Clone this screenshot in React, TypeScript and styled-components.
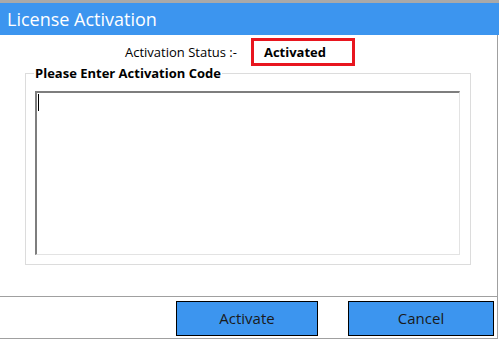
import React from "react";
import styled, { createGlobalStyle } from "styled-components";

const GlobalStyle = createGlobalStyle`
  html, body {
    margin: 0;
    padding: 0;
    background: #ffffff;
  }
  body {
    font-family: "Open Sans", "Noto Sans", "Liberation Sans", sans-serif;
  }
`;

// window frame
const Window = styled.div`
  width: 499px;
  height: 339px;
  box-sizing: border-box;
  border-top: 3px solid #a9a9a9;
  display: flex;
  flex-direction: column;
  background: #ffffff;
`;

const TitleBar = styled.div`
  height: 32px;
  background: #3c95ef;
  color: #ffffff;
  font-size: 18px;
  line-height: 32px;
  padding-left: 7px;
  flex-shrink: 0;
`;

const Body = styled.div`
  flex: 1;
  width: 498px;
  box-sizing: border-box;
  border-right: 1px solid #a0a0a0;
  border-bottom: 1px solid #a0a0a0;
  display: flex;
  flex-direction: column;
`;

const StatusRow = styled.div`
  display: flex;
  align-items: center;
  gap: 14px;
  padding-left: 125px;
  margin-top: 3px;
  height: 28px;
  font-size: 13px;
  color: #000;
`;

const StatusBox = styled.div`
  width: 104px;
  height: 28px;
  box-sizing: border-box;
  border: 3px solid #e8161f;
  font-weight: 700;
  font-size: 13px;
  display: flex;
  align-items: center;
  padding-left: 10px;
`;

const Group = styled.fieldset`
  margin: 0 0 0 25px;
  width: 446px;
  box-sizing: border-box;
  border: 1px solid #dcdcdc;
  padding: 11px 10px 9px 9px;
`;

const Legend = styled.legend`
  font-weight: 700;
  font-size: 13px;
  line-height: 14px;
  padding: 0 1px;
  margin-left: -1px;
  color: #000;
`;

const InputWrap = styled.div`
  position: relative;
`;

const CodeInput = styled.textarea`
  display: block;
  width: 425px;
  height: 164px;
  box-sizing: border-box;
  resize: none;
  outline: none;
  border-style: solid;
  border-width: 2px 1px 1px 2px;
  border-color: #7e7e7e #e3e3e3 #e3e3e3 #7e7e7e;
  padding: 2px 2px;
  font-family: inherit;
  font-size: 13px;
  caret-color: transparent;
`;

const Caret = styled.span`
  position: absolute;
  left: 3px;
  top: 3px;
  width: 1px;
  height: 17px;
  background: #000;
  pointer-events: none;
`;

const Spacer = styled.div`
  flex: 1;
`;

const Footer = styled.div`
  height: 42px;
  border-top: 1px solid #a0a0a0;
  display: flex;
  justify-content: flex-end;
  align-items: flex-start;
  gap: 30px;
  padding: 4px 3px 0 0;
  box-sizing: border-box;
`;

const Button = styled.button<{ $w: number }>`
  width: ${(p) => p.$w}px;
  height: 35px;
  box-sizing: border-box;
  border: 1px solid #000;
  background: #3c95ef;
  color: #1a1a1a;
  font-family: inherit;
  font-size: 15px;
  line-height: 30px;
  padding: 0 0 2px;
  margin: 0;
  cursor: pointer;
`;

export default function App() {
  const [code, setCode] = React.useState("");

  return (
    <>
      <GlobalStyle />
      <Window>
        <TitleBar>License Activation</TitleBar>
        <Body>
          <StatusRow>
            <span>Activation Status :-</span>
            <StatusBox>Activated</StatusBox>
          </StatusRow>
          <Group>
            <Legend>Please Enter Activation Code</Legend>
            <InputWrap>
              <CodeInput value={code} onChange={(e) => setCode(e.target.value)} />
              {code === "" && <Caret />}
            </InputWrap>
          </Group>
          <Spacer />
          <Footer>
            <Button $w={142}>Activate</Button>
            <Button $w={146}>Cancel</Button>
          </Footer>
        </Body>
      </Window>
    </>
  );
}
